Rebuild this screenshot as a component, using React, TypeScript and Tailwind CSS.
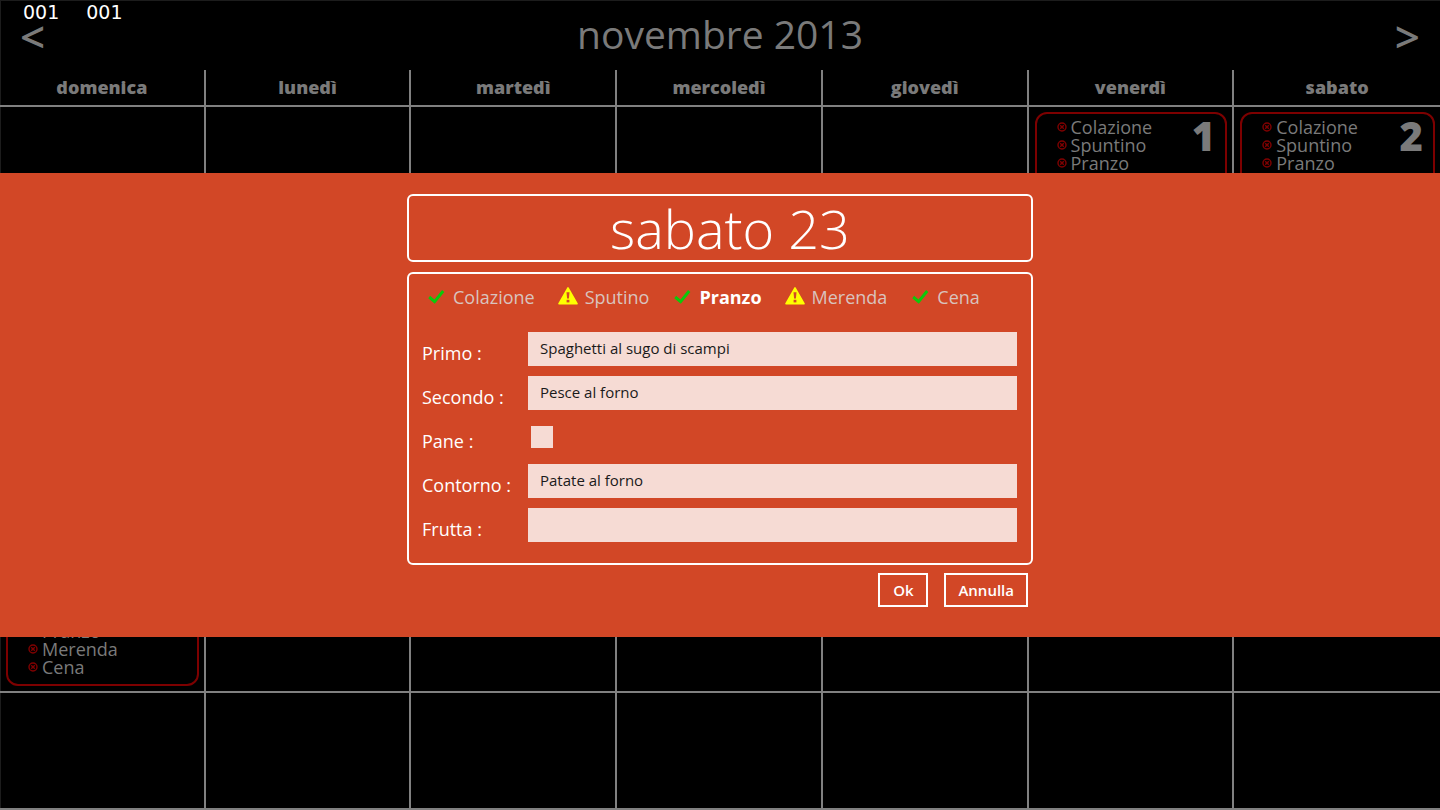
import { useState } from "react";

type MealState = "ok" | "warning";

const weekdays = ["domenica", "lunedì", "martedì", "mercoledì", "giovedì", "venerdì", "sabato"];

const meals = ["Colazione", "Spuntino", "Pranzo", "Merenda", "Cena"];

// Day numbers that have a meal card, by week; null is an empty cell.
const weeks: (number | null)[][] = [
  [null, null, null, null, null, 1, 2],
  [null, null, null, null, null, null, null],
  [null, null, null, null, null, null, null],
  [null, null, null, null, null, null, null],
  [24, null, null, null, null, null, null],
  [null, null, null, null, null, null, null],
];

const tabs: { label: string; state: MealState }[] = [
  { label: "Colazione", state: "ok" },
  { label: "Sputino", state: "warning" },
  { label: "Pranzo", state: "ok" },
  { label: "Merenda", state: "warning" },
  { label: "Cena", state: "ok" },
];

function MissingIcon() {
  return (
    <svg viewBox="0 0 10 10" className="size-[10px] shrink-0" aria-hidden="true">
      <circle cx="5" cy="5" r="4" fill="none" stroke="#800000" strokeWidth="1.4" />
      <path d="M3.2 3.2 6.8 6.8M6.8 3.2 3.2 6.8" stroke="#800000" strokeWidth="1.4" />
    </svg>
  );
}

function CheckIcon() {
  return (
    <svg viewBox="0 0 20 20" className="size-5 shrink-0" aria-hidden="true">
      <path d="M3.2 10 8.6 14.6 17.2 4" fill="none" stroke="#0bc90b" strokeWidth="3" />
    </svg>
  );
}

function WarningIcon() {
  return (
    <svg viewBox="0 0 20 20" className="size-5 shrink-0" aria-hidden="true">
      <path d="M10 0.9 19 16.7H1Z" fill="#ffff00" stroke="#ffff00" strokeWidth="1.6" strokeLinejoin="round" />
      <path d="M8.5 5.2h3l-.6 6.4H9.1Z" fill="#d24726" />
      <rect x="8.6" y="12.8" width="2.8" height="2.6" fill="#d24726" />
    </svg>
  );
}

function DayCard({ day }: { day: number }) {
  return (
    <div className="ml-1.5 mr-[5px] flex items-start justify-between rounded-xl border-2 border-[#7d0000] pt-1 pr-2.5 pb-2 pl-5 text-[#7a7a7a]">
      <ul className="text-lg leading-[18px]">
        {meals.map((meal) => (
          <li key={meal} className="flex items-center gap-1">
            <MissingIcon />
            {meal}
          </li>
        ))}
      </ul>
      <span className="text-[40px] leading-9 font-extrabold">{day}</span>
    </div>
  );
}

function TextRow({ id, label, initial }: { id: string; label: string; initial: string }) {
  const [value, setValue] = useState(initial);
  return (
    <div className="flex h-[34px]">
      <label htmlFor={id} className="w-[106px] shrink-0 pt-2 text-lg leading-[26px] text-white">
        {label} :
      </label>
      <input
        id={id}
        type="text"
        value={value}
        onChange={(e) => setValue(e.target.value)}
        className="min-w-0 flex-1 bg-[#f6dbd4] px-3 pb-0.5 text-[15px] text-[#1a1a1a] outline-none"
      />
    </div>
  );
}

export default function App() {
  const [active, setActive] = useState("Pranzo");
  const [bread, setBread] = useState(false);

  return (
    <main className="relative min-h-screen overflow-hidden bg-black font-['Open_Sans',sans-serif] shadow-[inset_1px_1px_#1c1c1c]">
      <div className="absolute top-0 left-[23px] flex gap-[27px] font-['DejaVu_Sans',sans-serif] text-[19px] leading-6 text-white">
        <span>001</span>
        <span>001</span>
      </div>

      <header className="flex h-[70px] items-center justify-between px-5 text-[#7a7a7a]">
        <button type="button" aria-label="Mese precedente" className="pt-0.5 text-[44px] leading-none font-semibold">
          &lt;
        </button>
        <h1 className="pb-1 text-[39px] leading-none">novembre 2013</h1>
        <button type="button" aria-label="Mese successivo" className="pt-0.5 text-[44px] leading-none font-semibold">
          &gt;
        </button>
      </header>

      <table className="h-[calc(100vh-70px)] w-full table-fixed border-separate border-spacing-0">
        <thead>
          <tr className="h-[37px]">
            {weekdays.map((name) => (
              <th key={name} scope="col" className="border-r-2 border-b-2 border-[#808080] px-0 pt-0 pb-0.5 text-lg leading-6 font-extrabold text-[#7a7a7a] last:border-r-0">
                {name}
              </th>
            ))}
          </tr>
        </thead>
        <tbody>
          {weeks.map((week, w) => (
            <tr key={w} className="h-[calc((100vh-107px)/6)]">
              {week.map((day, d) => (
                <td key={d} className="border-r-2 border-b-2 border-[#808080] p-0 align-middle last:border-r-0">
                  {day !== null && <DayCard day={day} />}
                </td>
              ))}
            </tr>
          ))}
        </tbody>
      </table>

      <div className="absolute inset-0 flex items-center">
        <section role="dialog" aria-labelledby="day-title" className="w-full bg-[#d24726] pt-[21px] pb-[30px]">
          <div className="mx-auto w-full max-w-[626px]">
            <h2 id="day-title" className="mb-2.5 rounded-md border-2 border-white pl-5 text-center text-[54px] leading-[64px] font-light text-white">
              sabato 23
            </h2>

            <form onSubmit={(e) => e.preventDefault()}>
              <div className="rounded-md border-2 border-white pt-2.5 pr-3.5 pb-[21px] pl-[13px]">
                <div role="tablist" className="mb-[22px] flex gap-[23px] pl-1 text-lg leading-[26px]">
                  {tabs.map(({ label, state }) => (
                    <button
                      key={label}
                      type="button"
                      role="tab"
                      aria-selected={active === label}
                      onClick={() => setActive(label)}
                      className={active === label ? "flex items-center gap-[7px] font-bold text-white" : "flex items-center gap-[7px] text-[#d9c3be]"}
                    >
                      {state === "ok" ? <CheckIcon /> : <WarningIcon />}
                      {label}
                    </button>
                  ))}
                </div>

                <div className="flex flex-col gap-2.5">
                  <TextRow id="primo" label="Primo" initial="Spaghetti al sugo di scampi" />
                  <TextRow id="secondo" label="Secondo" initial="Pesce al forno" />
                  <div className="flex h-[34px] items-center">
                    <label htmlFor="pane" className="w-[109px] shrink-0 pt-2 text-lg leading-[26px] text-white">
                      Pane :
                    </label>
                    <input
                      id="pane"
                      type="checkbox"
                      checked={bread}
                      onChange={(e) => setBread(e.target.checked)}
                      className="size-[22px] appearance-none bg-[#f6dbd4] checked:bg-white"
                    />
                  </div>
                  <TextRow id="contorno" label="Contorno" initial="Patate al forno" />
                  <TextRow id="frutta" label="Frutta" initial="" />
                </div>
              </div>

              <div className="mt-2 flex justify-end gap-4 pr-[5px] text-[15px] leading-[30px] font-semibold text-white">
                <button type="submit" className="min-w-[50px] border-2 border-white px-3">
                  Ok
                </button>
                <button type="button" className="border-2 border-white px-3">
                  Annulla
                </button>
              </div>
            </form>
          </div>
        </section>
      </div>
    </main>
  );
}
